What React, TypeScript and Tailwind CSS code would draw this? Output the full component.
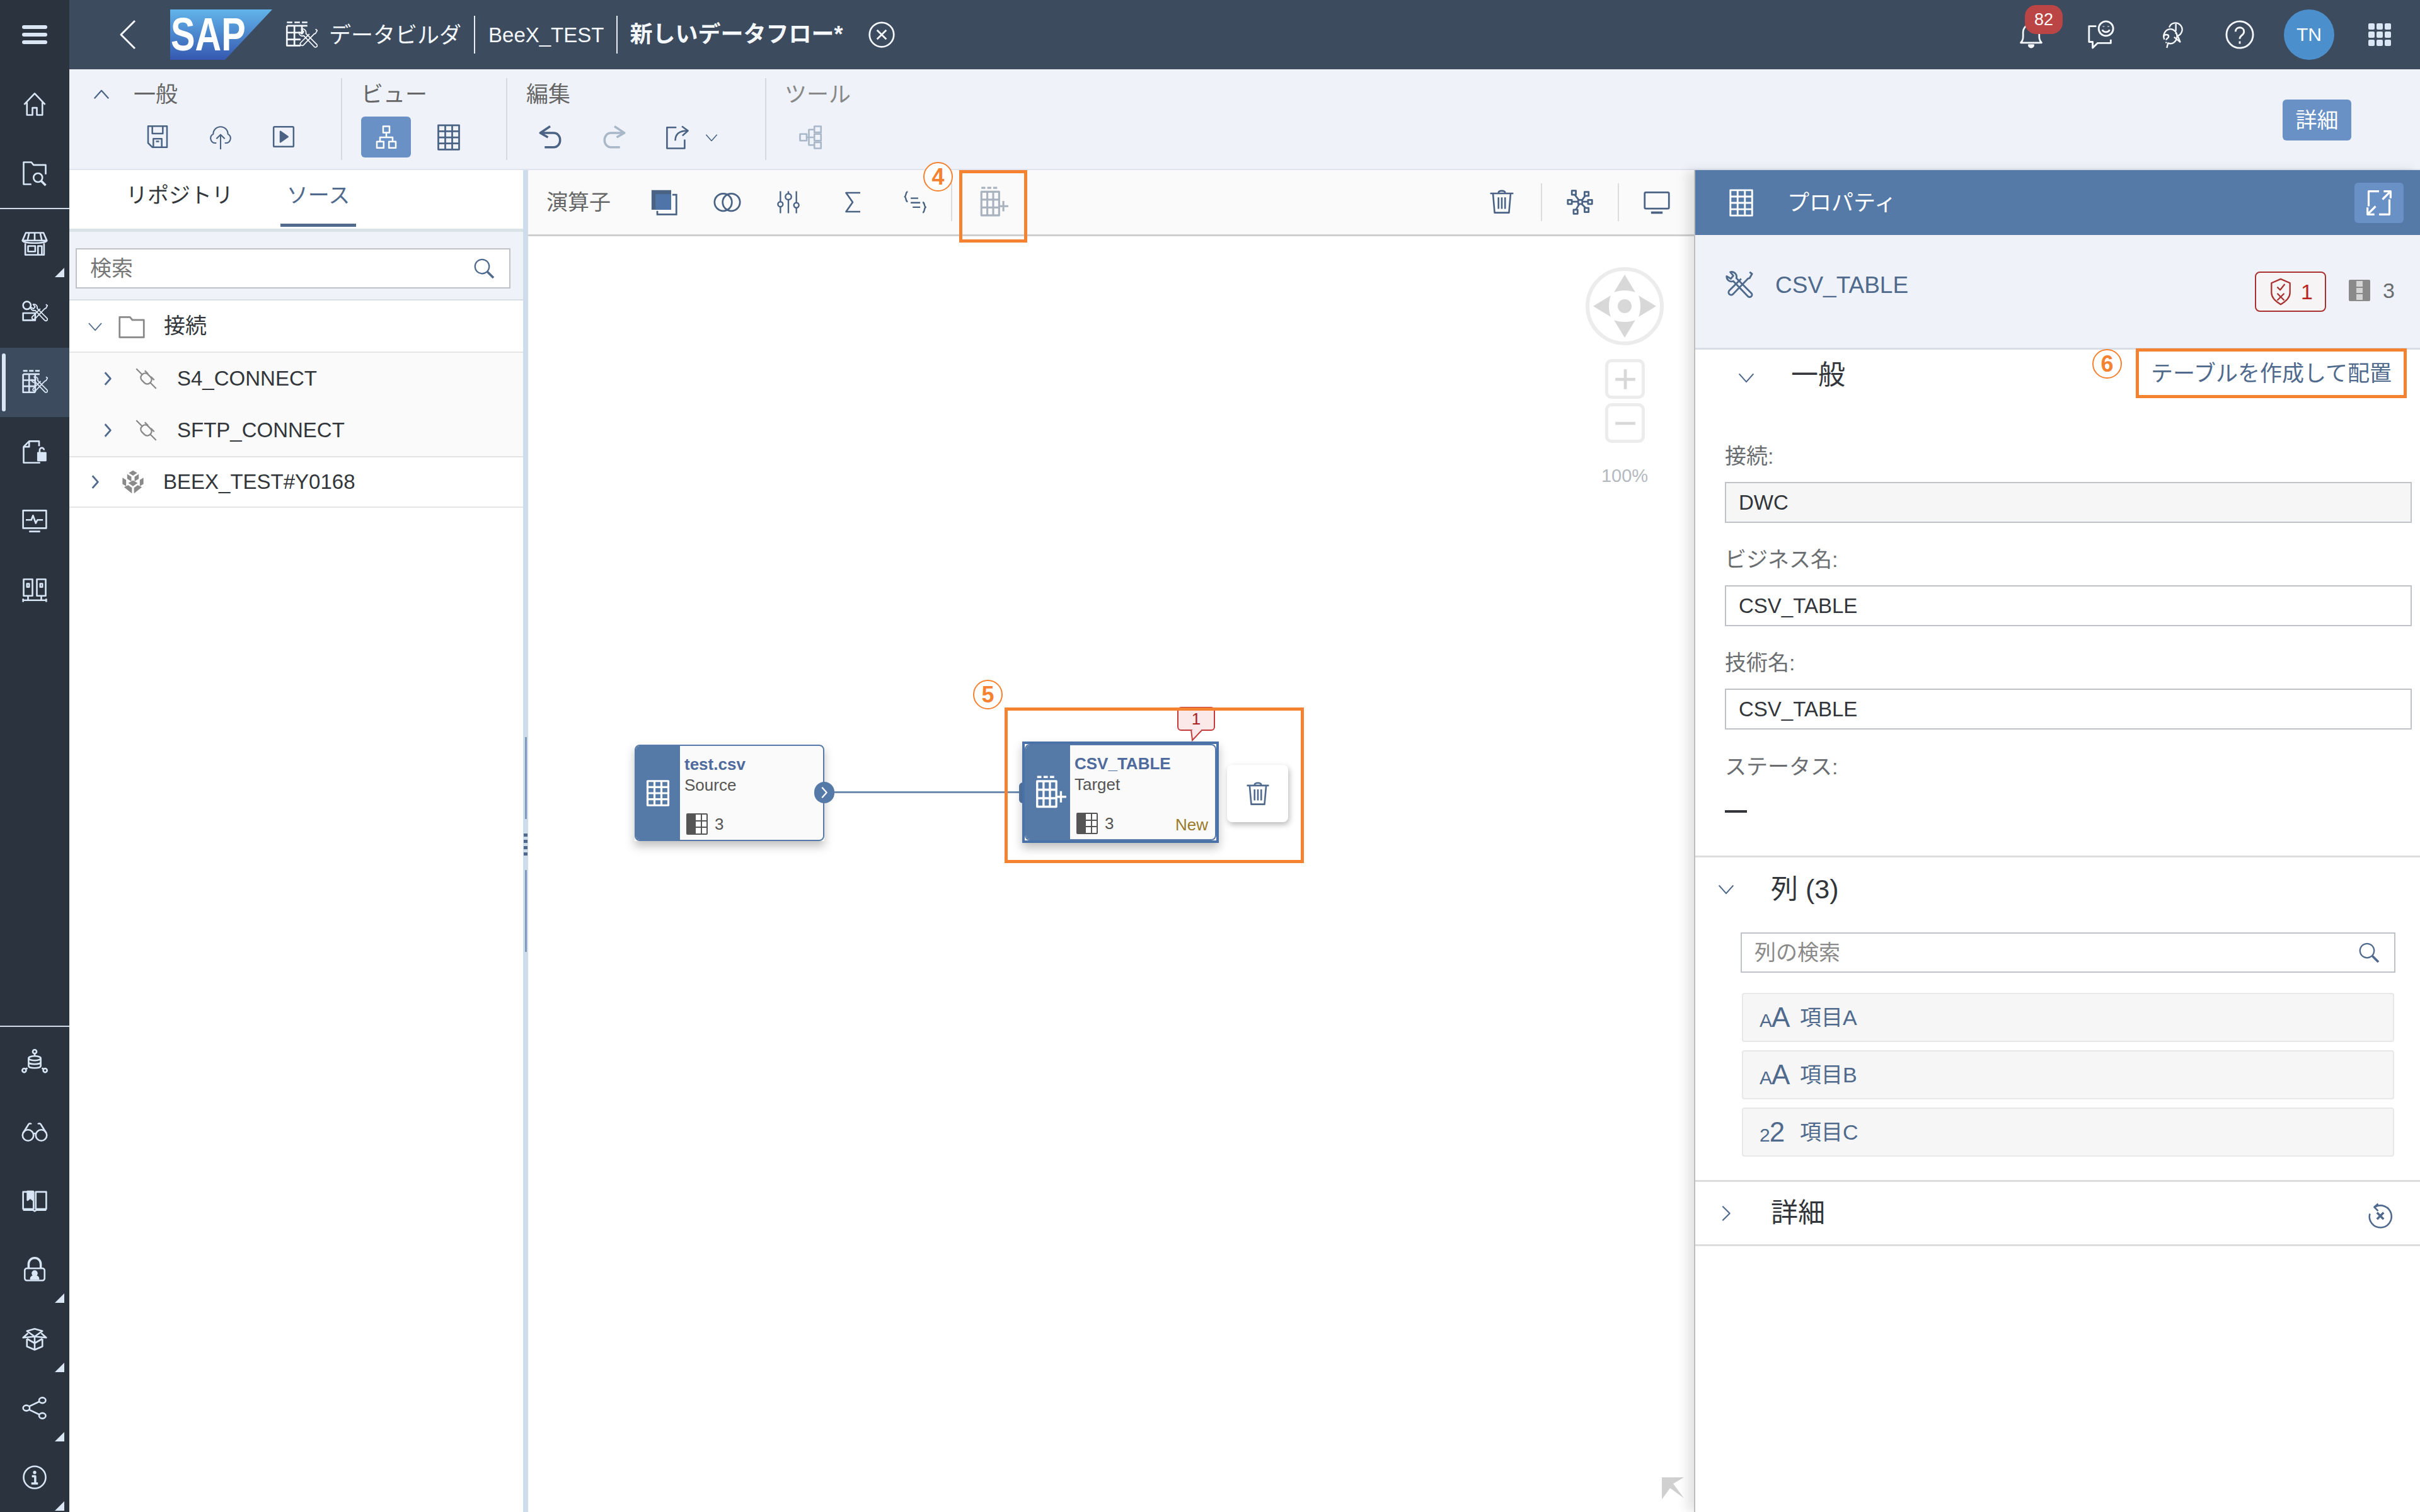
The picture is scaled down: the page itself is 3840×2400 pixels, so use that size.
import React, { JSX, ReactNode } from "react";

type IconProps = { className?: string; sw?: number; children?: ReactNode };

const Ico = ({ className = "", sw = 3, children }: IconProps): JSX.Element => (
	<svg viewBox="0 0 48 48" fill="none" stroke="currentColor" strokeWidth={sw} strokeLinejoin="round" className={className}>
		{children}
	</svg>
);

const Tools = () => (
	<>
		<path d="M4 10a8 8 0 0 0 11 8l24 25a3.500 3.500 0 0 0 6-5L20 13A8 8 0 0 0 10 3l5 6-4 5z" />
		<path d="M42 3l4 3-4 7-3 1-24 25a4 4 0 0 1-7-5l20-20" />
	</>
);

const GridLines = ({ x, y, w, h, c, r }: { x: number; y: number; w: number; h: number; c: number; r: number }) => (
	<>
		<rect x={x} y={y} width={w} height={h} />
		{Array.from({ length: c - 1 }).map((_, i) => (
			<line key={i} x1={x + ((i + 1) * w) / c} x2={x + ((i + 1) * w) / c} y1={y} y2={y + h} />
		))}
		{Array.from({ length: r - 1 }).map((_, i) => (
			<line key={i} y1={y + ((i + 1) * h) / r} y2={y + ((i + 1) * h) / r} x1={x} x2={x + w} />
		))}
	</>
);

const Table = ({ className }: { className?: string }) => (
	<Ico className={className}>
		<GridLines x={6} y={3} w={36} h={42} c={3} r={4} />
	</Ico>
);

const TablePlus = ({ className }: { className?: string }) => (
	<Ico className={className}>
		<path d="M6 2h6M15 2h6M24 2h6" strokeWidth={3} />
		<GridLines x={6} y={8} w={27} h={36} c={3} r={3} />
		<path d="M32 30h15M39.500 22v16" />
	</Ico>
);

const Columns = ({ className }: { className?: string }) => (
	<svg viewBox="0 0 34 34" className={className}>
		<rect width="34" height="34" rx="2" fill="currentColor" />
		<path d="M15 2h8v9h-8zM25 2h7v9h-7zM15 13h8v8h-8zM25 13h7v8h-7zM15 23h8v9h-8zM25 23h7v9h-7z" fill="#fff" />
	</svg>
);

const Search = ({ className }: { className?: string }) => (
	<Ico className={className} sw={3}>
		<circle cx="20" cy="20" r="15" />
		<path d="M31 31l13 13" strokeWidth={5} />
	</Ico>
);

const Chev = ({ className }: { className?: string }) => (
	<Ico className={className} sw={3}>
		<path d="M8 16l16 18 16-18" />
	</Ico>
);

const ChevR = ({ className }: { className?: string }) => (
	<Ico className={className} sw={5}>
		<path d="M16 6l16 18-16 18" />
	</Ico>
);

const Plug = ({ className }: { className?: string }) => (
	<Ico className={className} sw={3}>
		<path d="M3 3l13 13M32 32l13 13M21 7l7 7M34 20l7 7" />
		<rect x="12" y="15" width="24" height="18" rx="8" transform="rotate(45 24 24)" />
	</Ico>
);

const navTop = [
	{
		k: "store",
		arrow: true,
		icon: (
			<>
				<path d="M8 4h32l6 14H2z" />
				<path d="M14 4l-3 14M24 4v14M34 4l3 14M2 18c0 6 44 6 44 0" />
				<path d="M7 23v21h34V23M12 28h13v10H12zM30 44V28h7v16" />
			</>
		),
	},
	{
		k: "tools",
		arrow: false,
		icon: (
			<>
				<circle cx="10" cy="10" r="7" />
				<rect x="3" y="24" width="22" height="13" />
				<g transform="translate(14 6) scale(0.72)">
					<Tools />
				</g>
			</>
		),
	},
	{
		k: "builder",
		arrow: false,
		active: true,
		icon: (
			<>
				<path d="M3 3h8M14 3h8M25 3h8" />
				<path d="M3 9h30M3 9v33h22M3 20h22M3 31h22M14 9v33M25 9v33" />
				<g transform="translate(16 12) scale(0.68)">
					<Tools />
				</g>
			</>
		),
	},
	{
		k: "doc",
		arrow: false,
		icon: (
			<>
				<path d="M32 14V5H14L4 15v29h30" />
				<path d="M14 5v10H4" />
				<rect x="30" y="26" width="14" height="14" fill="currentColor" />
				<path d="M33 26v-5a4 4 0 0 1 8 0" />
			</>
		),
	},
	{
		k: "monitor",
		arrow: false,
		icon: (
			<>
				<rect x="3" y="5" width="42" height="32" />
				<path d="M8 22h10l3-8 5 14 3-6h10M14 43h20" />
			</>
		),
	},
	{
		k: "server",
		arrow: false,
		icon: (
			<>
				<rect x="4" y="4" width="16" height="30" />
				<rect x="28" y="4" width="16" height="30" />
				<path d="M10 12h4v6h-4zM34 12h4v6h-4zM12 34v8M36 34v8M3 42h42M3 39v6M45 39v6" />
			</>
		),
	},
];

const navBottom = [
	{
		k: "data",
		arrow: false,
		icon: (
			<>
				<ellipse cx="24" cy="18" rx="11" ry="4" />
				<path d="M13 18v14c0 5 22 5 22 0V18M13 25c0 5 22 5 22 0M24 9v5M11 36l-4 2M37 36l4 2" />
				<circle cx="24" cy="6" r="3.500" />
				<circle cx="5" cy="40" r="3.500" />
				<circle cx="43" cy="40" r="3.500" />
			</>
		),
	},
	{
		k: "glasses",
		arrow: false,
		icon: (
			<>
				<circle cx="12" cy="32" r="10" />
				<circle cx="36" cy="32" r="10" />
				<path d="M22 30c1-2 3-2 4 0M3 28L13 12c1-2 4-2 5 0M45 28L35 12c-1-2-4-2-5 0" />
			</>
		),
	},
	{
		k: "book",
		arrow: false,
		icon: (
			<>
				<path d="M3 9h19v31H3zM26 9h19v31H26zM3 42h18l3 2 3-2h18" />
				<path d="M11 8v16l5-4 5 4V8z" fill="currentColor" />
			</>
		),
	},
	{
		k: "lock",
		arrow: true,
		icon: (
			<>
				<path d="M13 22V14a11 11 0 0 1 22 0v8" strokeWidth={4} />
				<rect x="6" y="22" width="36" height="22" rx="4" />
				<circle cx="24" cy="31" r="4" fill="currentColor" />
				<path d="M17 41c0-7 14-7 14 0z" fill="currentColor" />
			</>
		),
	},
	{
		k: "box",
		arrow: true,
		icon: (
			<>
				<path d="M24 20L10 10 24 6l14 4zM24 20L3 22l9-8M24 20l21 2-9-8" />
				<path d="M10 24v14l14 6 14-6V24M24 20v24M24 32l-14-8M24 32l14-8" />
			</>
		),
	},
	{
		k: "share",
		arrow: true,
		icon: (
			<>
				<ellipse cx="9" cy="24" rx="6" ry="5" />
				<ellipse cx="38" cy="10" rx="6" ry="5" />
				<ellipse cx="38" cy="38" rx="6" ry="5" />
				<path d="M14 21l19-9M14 27l19 9" />
			</>
		),
	},
	{
		k: "info",
		arrow: true,
		icon: (
			<>
				<circle cx="24" cy="24" r="20" />
				<circle cx="24" cy="15" r="3" fill="currentColor" stroke="none" />
				<path d="M19 22h6v12M18 35h12" strokeWidth={4} />
			</>
		),
	},
];

const NavItem = ({ item }: { item: { icon: ReactNode; arrow: boolean; active?: boolean } }) => (
	<div className={`relative flex h-[110px] w-full items-center justify-center ${item.active ? "bg-[#3d4b5f]" : ""}`}>
		{item.active && <div className="absolute left-[3px] top-[9px] h-[92px] w-[6px] rounded bg-[#dbe6f4]" />}
		<Ico className="h-[42px] w-[42px]">{item.icon}</Ico>
		{item.arrow && <div className="absolute bottom-[2px] right-[8px] h-0 w-0 border-b-[15px] border-l-[15px] border-b-[#dbe6f4] border-l-transparent" />}
	</div>
);

const Nav = () => (
	<nav className="flex h-full w-[110px] shrink-0 flex-col bg-[#2b333e] text-[#d8e5f5]">
		<div className="flex h-[110px] w-full items-center justify-center">
			<div className="flex w-[40px] flex-col gap-[6px]">
				<div className="h-[6px] rounded-sm bg-[#dbe6f4]" />
				<div className="h-[6px] rounded-sm bg-[#dbe6f4]" />
				<div className="h-[6px] rounded-sm bg-[#dbe6f4]" />
			</div>
		</div>
		<NavItem
			item={{
				arrow: false,
				icon: (
					<>
						<path d="M5 25L24 5l19 20M10 21v23h10V31h8v13h10V21" />
					</>
				),
			}}
		/>
		<NavItem
			item={{
				arrow: false,
				icon: (
					<>
						<path d="M18 44H4V4h14l4 5h22v17" />
						<circle cx="30" cy="32" r="8" />
						<path d="M36 38l8 8" strokeWidth={4} />
					</>
				),
			}}
		/>
		<div className="h-[2px] w-full bg-[#cfdbe9]" />
		{navTop.map((n) => (
			<NavItem key={n.k} item={n} />
		))}
		<div className="mt-auto h-[2px] w-full bg-[#cfdbe9]" />
		{navBottom.map((n) => (
			<NavItem key={n.k} item={n} />
		))}
	</nav>
);

const Header = () => (
	<header className="flex h-[110px] w-full items-center bg-[#3d4b5f] text-[#f4f8fd]">
		<Ico className="ml-[68px] h-[48px] w-[48px]" sw={3}>
			<path d="M36 2L14 24l22 22" />
		</Ico>
		<div className="relative ml-[44px] h-[80px] w-[162px]">
			<svg viewBox="0 0 162 80" className="h-[80px] w-[162px]">
				<defs>
					<linearGradient id="sapg" x1="0" y1="0" x2="0" y2="1">
						<stop offset="0" stopColor="#62b4ea" />
						<stop offset="1" stopColor="#3558b0" />
					</linearGradient>
				</defs>
				<polygon points="0,0 162,0 87,80 0,80" fill="url(#sapg)" />
			</svg>
			<span className="absolute left-[1px] top-0 origin-left scale-x-[0.78] text-[74px] font-bold leading-[80px] text-white">SAP</span>
		</div>
		<Ico className="ml-[20px] h-[52px] w-[52px]" sw={2.500}>
			<path d="M3 6h8M14 6h8M25 6h8M3 11h30M3 11v29h20M3 21h24M3 31h20M14 11v29M25 11v12" />
			<g transform="translate(18 14) scale(0.64)">
				<Tools />
			</g>
		</Ico>
		<span className="ml-[18px] text-[35px] leading-none">データビルダ</span>
		<div className="ml-[20px] h-[60px] w-[2px] bg-[#e6edf6]" />
		<span className="ml-[21px] text-[33px] leading-none">BeeX_TEST</span>
		<div className="ml-[20px] h-[60px] w-[2px] bg-[#e6edf6]" />
		<span className="ml-[19px] text-[36px] font-bold leading-none">新しいデータフロー*</span>
		<Ico className="ml-[40px] h-[44px] w-[44px]">
			<circle cx="24" cy="24" r="21" />
			<path d="M16 16l16 16M32 16L16 32" />
		</Ico>
		<div className="ml-auto flex h-full items-center">
			<div className="relative flex h-[44px] w-[44px] items-center justify-center">
				<Ico className="h-[44px] w-[44px]">
					<path d="M6 38c5-5 4-10 4-18a14 14 0 0 1 28 0c0 8-1 13 4 18z" />
					<path d="M20 42a4 4 0 0 0 8 0z" fill="currentColor" />
				</Ico>
				<div className="absolute left-[12px] top-[-25px] flex h-[46px] w-[60px] items-center justify-center rounded-[18px] bg-[#bb4545] text-[27px] leading-none text-white">82</div>
			</div>
			<Ico className="ml-[66px] h-[46px] w-[46px]">
				<path d="M16 10H4v26h6v10l8-8h22v-6" />
				<circle cx="32" cy="14" r="12" />
				<path d="M26 16c2 5 10 5 12 0M28 10v1M36 10v1" />
			</Ico>
			<Ico className="ml-[64px] h-[46px] w-[46px]" sw={2.500}>
				<path d="M14 46l2-8a11 12 0 1 0-6-6" transform="translate(4 0)" />
				<path d="M22 12a11 11 0 1 1 14 14l4 10-10-8" />
				<path d="M13 27c0-4 8-4 8 0 0 3-4 3-4 6M17 36v2M33 6v12M33 21v2" />
			</Ico>
			<Ico className="ml-[64px] h-[46px] w-[46px]">
				<circle cx="24" cy="24" r="22" />
				<path d="M17 19c0-9 14-9 14 0 0 6-7 6-7 12M24 35v4" />
			</Ico>
			<div className="ml-[47px] flex h-[80px] w-[80px] items-center justify-center rounded-full bg-[#4b90cc] text-[30px] leading-none text-white">TN</div>
			<div className="ml-[54px] mr-[46px] grid w-[36px] grid-cols-3 gap-[3px]">
				{Array.from({ length: 9 }).map((_, i) => (
					<div key={i} className="h-[10px] rounded-[2px] bg-[#dbe6f4]" />
				))}
			</div>
		</div>
	</header>
);

const Sep = () => <div className="h-[130px] w-[2px] self-center bg-[#d5dae1]" />;

const Ribbon = () => (
	<div className="relative flex h-[160px] w-full items-start border-b-[2px] border-b-[#dfe4ee] bg-[#eff3f9] text-[#4a6385]">
		<div className="w-[431px] shrink-0 pl-[32px] pt-[15px]">
			<div className="flex items-center text-[#666]">
				<Ico className="ml-[4px] h-[30px] w-[30px] text-[#4a6385]" sw={3.500}>
					<path d="M6 34l18-20 18 20" />
				</Ico>
				<span className="ml-[36px] text-[35px] leading-[50px]">一般</span>
			</div>
			<div className="mt-[22px] ml-[88px] flex gap-[60px]">
				<Ico className="h-[40px] w-[40px]">
					<path d="M6 4h36v40H14l-8-8z" />
					<path d="M14 4v14h20V4M16 44V28h16v16M21 33h6" />
				</Ico>
				<Ico className="h-[40px] w-[40px]" sw={2.500}>
					<path d="M16 36h-2a9 9 0 0 1-4-17 14 14 0 0 1 28 0 9 9 0 0 1-4 17h-2M24 48V20M16 28l8-8 8 8" />
				</Ico>
				<Ico className="h-[40px] w-[40px]">
					<rect x="5" y="5" width="38" height="38" rx="2" />
					<path d="M18 14l14 10-14 10z" fill="currentColor" />
				</Ico>
			</div>
		</div>
		<Sep />
		<div className="w-[260px] shrink-0 pl-[30px] pt-[15px]">
			<div className="text-[35px] leading-[50px] text-[#666]">ビュー</div>
			<div className="mt-[10px] flex items-center">
				<div className="flex h-[65px] w-[79px] items-center justify-center rounded-md bg-[#6a91c6] text-white">
					<Ico className="h-[40px] w-[40px]">
						<rect x="18" y="3" width="12" height="12" />
						<rect x="6" y="32" width="13" height="12" />
						<rect x="29" y="32" width="13" height="12" />
						<path d="M24 15v9M12 32v-8h24v8" />
					</Ico>
				</div>
				<Table className="ml-[38px] h-[44px] w-[44px]" />
			</div>
		</div>
		<Sep />
		<div className="w-[409px] shrink-0 pl-[30px] pt-[15px]">
			<div className="text-[35px] leading-[50px] text-[#666]">編集</div>
			<div className="mt-[22px] flex items-center">
				<Ico className="ml-[17px] h-[42px] w-[42px]" sw={4}>
					<path d="M24 4L6 16l14 8M6 16h24c16 0 16 26 0 26H14" />
				</Ico>
				<Ico className="ml-[60px] h-[42px] w-[42px] text-[#a9b8c8]" sw={4}>
					<path d="M24 4l18 12-14 8M42 16H18C2 16 2 42 18 42h16" />
				</Ico>
				<Ico className="ml-[58px] h-[42px] w-[42px]">
					<path d="M22 6H5v38h32V28" />
					<path d="M20 30c0-12 8-18 22-18M32 4l11 8-10 9" />
				</Ico>
				<Chev className="ml-[20px] h-[26px] w-[26px]" />
			</div>
		</div>
		<Sep />
		<div className="pl-[29px] pt-[15px]">
			<div className="text-[35px] leading-[50px] text-[#888]">ツール</div>
			<div className="mt-[22px] ml-[21px] text-[#a9b8c8]">
				<Ico className="h-[42px] w-[42px]">
					<rect x="4" y="18" width="12" height="12" />
					<rect x="30" y="4" width="12" height="11" />
					<rect x="30" y="18" width="12" height="12" />
					<rect x="30" y="33" width="12" height="11" />
					<path d="M16 24h14M20 24v-14h10M20 24v14h10" />
				</Ico>
			</div>
		</div>
		<div className="ml-auto mr-[109px] mt-[48px] flex h-[65px] w-[109px] items-center justify-center rounded-md bg-[#6a91c6] text-[34px] leading-none text-white">詳細</div>
	</div>
);

const LeftPanel = () => (
	<aside className="flex h-full w-[720px] shrink-0 flex-col bg-white text-[33px] text-[#32363a]">
		<div className="flex h-[98px] items-start border-b-[5px] border-b-[#d9e3e8] text-[34px]">
			<span className="ml-[90px] mt-[15px] leading-[50px]">リポジトリ</span>
			<div className="ml-[75px] flex h-[93px] w-[120px] flex-col items-center text-[#4f6a8c]">
				<span className="mt-[15px] leading-[50px]">ソース</span>
				<div className="mt-auto mb-[3px] h-[5px] w-full bg-[#4f6a8c]" />
			</div>
		</div>
		<div className="h-[109px] border-b-[2px] border-b-[#d9dee5] bg-[#eff3f9] pl-[10px] pr-[20px] pt-[26px]">
			<div className="flex h-[64px] items-center justify-between border-[2px] border-[#bfc3c8] bg-white pl-[21px] pr-[22px] text-[34px] text-[#777]">
				<span>検索</span>
				<Search className="h-[36px] w-[36px] text-[#4f6a8c]" />
			</div>
		</div>
		<div className="flex h-[83px] items-center border-b-[2px] border-b-[#e5e5e5] text-[34px]">
			<Chev className="ml-[26px] h-[30px] w-[30px] text-[#4f6a8c]" />
			<Ico className="ml-[21px] h-[44px] w-[44px] text-[#888]">
				<path d="M3 8h18l4 5h20v30H3z" />
			</Ico>
			<span className="ml-[29px]">接続</span>
		</div>
		{["S4_CONNECT", "SFTP_CONNECT"].map((t) => (
			<div key={t} className="flex h-[82px] items-center bg-[#fafafa]">
				<ChevR className="ml-[48px] h-[26px] w-[26px] text-[#4f6a8c]" />
				<Plug className="ml-[30px] h-[36px] w-[36px] text-[#888]" />
				<span className="ml-[31px]">{t}</span>
			</div>
		))}
		<div className="flex h-[82px] items-center border-y-[2px] border-y-[#e5e5e5]">
			<ChevR className="ml-[28px] h-[26px] w-[26px] text-[#4f6a8c]" />
			<svg viewBox="0 0 48 48" className="ml-[27px] h-[40px] w-[40px] text-[#8a8a8a]">
				<path d="M24 2l8 5-8 5-8-5zM13 9l8 5v9l-8-5zM35 9l-8 5v9l8-5zM4 16l7 4v12l-7-4zM44 16l-7 4v12l7-4zM24 21l9 5-9 6-9-6zM7 34l8-4 7 5v11zM41 34l-8-4-7 5v11z" fill="currentColor" />
			</svg>
			<span className="ml-[28px]">BEEX_TEST#Y0168</span>
		</div>
	</aside>
);

const Splitter = () => (
	<div className="relative flex h-full w-[8px] shrink-0 flex-col items-center bg-[#cfdceb]">
		<div className="mt-[900px] h-[130px] w-[3px] bg-[#7f9abb]" />
		<div className="mt-[23px] flex flex-col gap-[5px]">
			<div className="h-[5px] w-[6px] bg-[#4f6a8c]" />
			<div className="h-[5px] w-[6px] bg-[#4f6a8c]" />
			<div className="h-[5px] w-[6px] bg-[#4f6a8c]" />
			<div className="h-[5px] w-[6px] bg-[#4f6a8c]" />
		</div>
		<div className="mt-[23px] h-[130px] w-[3px] bg-[#7f9abb]" />
	</div>
);

const Mark = ({ n, className }: { n: number; className: string }) => (
	<div className={`absolute flex h-[47px] w-[47px] items-center justify-center rounded-full border-[2px] border-[#f58231] bg-white text-[36px] font-bold leading-none text-[#f58231] ${className}`}>
		{n}
	</div>
);

const ToolSep = () => <div className="h-[60px] w-[2px] bg-[#dcdcdc]" />;

const NodeBody = ({ title, sub, tail, children }: { title: string; sub: string; tail?: string; children: ReactNode }) => (
	<div className="flex h-[153px] w-full overflow-hidden rounded-[8px] border-[2px] border-[#567aa8] bg-[#fafafa]">
		<div className="flex h-full w-[70px] shrink-0 items-center justify-center bg-[#567aa8] text-white">{children}</div>
		<div className="relative flex-1 pl-[7px] pt-[12px]">
			<div className="text-[26px] font-bold leading-[34px] text-[#4f6a9c]">{title}</div>
			<div className="text-[26px] leading-[32px] text-[#555]">{sub}</div>
			<div className="absolute bottom-[8px] left-[10px] flex items-center gap-[11px] text-[26px] leading-none text-[#555]">
				<Columns className="h-[34px] w-[34px] text-[#555]" />3
			</div>
			{tail && <div className="absolute bottom-[10px] right-[11px] text-[26px] leading-none text-[#9a7b2a]">{tail}</div>}
		</div>
	</div>
);

const Canvas = () => (
	<main className="relative h-full w-[1850px] shrink-0 bg-white">
		<div className="flex h-[105px] items-center border-b-[3px] border-b-[#cfcfcf] bg-[#fafafa] text-[#4a6385]">
			<span className="ml-[29px] text-[34px] leading-none text-[#666]">演算子</span>
			<svg viewBox="0 0 48 48" className="ml-[63px] h-[44px] w-[44px]">
				<rect x="2" y="3" width="34" height="34" fill="currentColor" />
				<path d="M38 11h7v34H12v-6" fill="none" stroke="currentColor" strokeWidth="3" />
				<rect x="9" y="10" width="27" height="27" fill="#4f75a8" />
			</svg>
			<Ico className="ml-[56px] h-[44px] w-[44px]">
				<circle cx="17" cy="24" r="15" />
				<circle cx="31" cy="24" r="15" />
			</Ico>
			<Ico className="ml-[55px] h-[38px] w-[40px]">
				<path d="M8 2v20M8 34v12M24 2v4M24 20v26M40 2v22M40 36v10" />
				<circle cx="8" cy="28" r="5" />
				<circle cx="24" cy="13" r="6" />
				<circle cx="40" cy="30" r="5" />
			</Ico>
			<Ico className="ml-[62px] h-[36px] w-[40px]" sw={3.500}>
				<path d="M40 4H10l14 20-14 20h30" />
			</Ico>
			<Ico className="ml-[60px] h-[38px] w-[40px]">
				<path d="M8 3C3 3 6 11 2 13c4 2 1 9 6 10M14 16h15M14 25h19M18 34h15M38 24c5 1 2 8 6 10-4 2-1 10-6 11" />
			</Ico>
			<div className="ml-[36px]">
				<ToolSep />
			</div>
			<TablePlus className="ml-[40px] h-[50px] w-[50px] text-[#a9b3c0]" />
			<div className="ml-auto flex items-center">
				<Ico className="h-[42px] w-[42px]">
					<path d="M3 8h42M18 7c0-5 12-5 12 0M8 8l3 35h26l3-35M18 15v21M24 15v21M30 15v21" />
				</Ico>
				<div className="ml-[41px]">
					<ToolSep />
				</div>
				<Ico className="ml-[38px] h-[44px] w-[44px]">
					<path d="M10 4h7v7h-7zM32 6h7v7h-7zM3 20h7v7H3zM21 20h7v7h-7zM38 20h7v7h-7zM13 37h7v7h-7zM32 34h7v7h-7z" />
					<path d="M15 11l7 9M33 13l-5 7M10 23h11M28 23h10M17 37l6-10M34 34l-7-7" />
				</Ico>
				<div className="ml-[38px]">
					<ToolSep />
				</div>
				<Ico className="ml-[38px] mr-[37px] h-[44px] w-[44px]">
					<rect x="3" y="7" width="42" height="28" rx="2" />
					<path d="M14 42h20" strokeWidth={4} />
				</Ico>
			</div>
		</div>

		<div className="absolute left-[684px] top-0 h-[115px] w-[108px] border-[5px] border-[#f58231]" />
		<Mark n={4} className="left-[627px] top-[-13px]" />

		{/* flow diagram */}
		<div className="absolute left-[169px] top-[912px] w-[301px] shadow-[0_8px_14px_rgba(0,0,0,0.25)]">
			<NodeBody title="test.csv" sub="Source">
				<Ico className="h-[44px] w-[44px]" sw={3.500}>
					<GridLines x={6} y={3} w={36} h={42} c={3} r={4} />
				</Ico>
			</NodeBody>
		</div>
		<div className="absolute left-[454px] top-[971px] flex h-[34px] w-[32px] items-center justify-center rounded-full bg-[#567aa8] text-white">
			<ChevR className="h-[22px] w-[22px]" />
		</div>
		<div className="absolute left-[486px] top-[986px] h-[3px] w-[293px] bg-[#6f8db3]" />
		<div className="absolute left-[779px] top-[972px] h-[33px] w-[6px] rounded-l-md bg-[#567aa8]" />
		<div className="absolute left-[784px] top-[907px] w-[312px] border-[4px] border-[#4a72a8] shadow-[0_8px_14px_rgba(0,0,0,0.25)]">
			<NodeBody title="CSV_TABLE" sub="Target" tail="New">
				<TablePlus className="ml-[6px] h-[54px] w-[54px]" />
			</NodeBody>
		</div>
		<div className="absolute left-[1030px] top-[852px] flex h-[38px] w-[60px] items-center justify-center rounded-[6px] border-[2px] border-[#c43b3b] bg-[#fbe8e8] text-[26px] leading-none text-[#a82020]">1</div>
		<svg viewBox="0 0 30 20" className="absolute left-[1049px] top-[888px] h-[20px] w-[30px] text-[#c43b3b]">
			<path d="M3 0l2 17L21 0z" fill="#fbe8e8" stroke="currentColor" strokeWidth="2" />
			<path d="M5 0h14" stroke="#fbe8e8" strokeWidth="3" />
		</svg>
		<div className="absolute left-[1109px] top-[944px] flex h-[91px] w-[97px] items-center justify-center rounded-[8px] bg-white shadow-[2px_4px_10px_rgba(0,0,0,0.28)] text-[#4f6a8c]">
			<Ico className="h-[42px] w-[42px]">
				<path d="M4 9h40M18 8c0-5 12-5 12 0M9 9l3 34h24l3-34M18 16v20M24 16v20M30 16v20" />
			</Ico>
		</div>
		<div className="absolute left-[756px] top-[853px] h-[247px] w-[475px] border-[5px] border-[#f58231]" />
		<Mark n={5} className="left-[706px] top-[809px]" />

		{/* zoom control */}
		<svg viewBox="0 0 124 124" className="absolute left-[1678px] top-[154px] h-[124px] w-[124px]">
			<circle cx="62" cy="62" r="59" fill="none" stroke="#ececec" strokeWidth="6" />
			<path d="M62 12l17 28c-10-4-24-4-34 0zM62 112l17-28c-10 4-24 4-34 0zM12 62l28-17c-4 10-4 24 0 34zM112 62l-28-17c4 10 4 24 0 34z" fill="#d8d8d8" />
			<circle cx="62" cy="62" r="11" fill="#d8d8d8" />
		</svg>
		<div className="absolute left-[1709px] top-[300px] flex h-[63px] w-[63px] items-center justify-center rounded-[10px] border-[5px] border-[#ececec]">
			<Ico className="h-[38px] w-[38px] text-[#d8d8d8]" sw={6}>
				<path d="M24 4v40M4 24h40" />
			</Ico>
		</div>
		<div className="absolute left-[1709px] top-[370px] flex h-[63px] w-[63px] items-center justify-center rounded-[10px] border-[5px] border-[#ececec]">
			<Ico className="h-[38px] w-[38px] text-[#d8d8d8]" sw={6}>
				<path d="M4 24h40" />
			</Ico>
		</div>
		<div className="absolute left-[1680px] top-[466px] w-[120px] text-center text-[29px] leading-[38px] text-[#b5b9bf]">100%</div>
		<svg viewBox="0 0 36 36" className="absolute left-[1799px] top-[2075px] h-[36px] w-[36px]">
			<polygon points="0,0 35,0 18,10 35,33 13,17 0,35" fill="#d0d0d0" />
		</svg>
	</main>
);

const FormField = ({ label, value, dim }: { label: string; value: string; dim?: boolean }) => (
	<div className="mb-[33px]">
		<div className="text-[34px] leading-[50px] text-[#6a6d70]">{label}</div>
		<div className={`mt-[16px] flex h-[65px] items-center border-[2px] border-[#bfc3c8] pl-[20px] text-[33px] leading-none text-[#32363a] ${dim ? "bg-[#f6f6f6]" : "bg-white"}`}>{value}</div>
	</div>
);

const ColItem = ({ kind, label }: { kind: string; label: string }) => (
	<div className="flex h-[78px] items-center rounded-[4px] border-[2px] border-[#e8e8e8] bg-[#f6f6f6] pl-[26px] text-[#4f6a8c]">
		<span className="flex w-[64px] items-baseline leading-none">
			<span className="text-[30px]">{kind}</span>
			<span className="ml-[-1px] text-[44px]">{kind}</span>
		</span>
		<span className="text-[34px] leading-none">{label}</span>
	</div>
);

const RightPanel = () => (
	<section className="z-10 flex h-full flex-1 flex-col border-l-[2px] border-l-[#bdbdbd] bg-white shadow-[-12px_0_16px_rgba(0,0,0,0.1)]">
		<div className="flex h-[103px] shrink-0 items-center bg-[#567aa8] text-white">
			<Table className="ml-[50px] h-[46px] w-[46px]" />
			<span className="ml-[50px] text-[35px] leading-none">プロパティ</span>
			<div className="ml-auto mr-[26px] flex h-[64px] w-[78px] items-center justify-center rounded-md bg-[#6a91c6]">
				<Ico className="h-[44px] w-[44px]" sw={3.500}>
					<path d="M24 4H6v26M24 44h18V18M30 18L44 4M32 4h12v12M18 30L4 44M4 32v12h12" />
				</Ico>
			</div>
		</div>
		<div className="flex h-[182px] shrink-0 items-start border-b-[3px] border-b-[#d9dee6] bg-[#eff3f9] text-[#4f6a8c]">
			<Ico className="ml-[46px] mt-[56px] h-[46px] w-[46px]">
				<Tools />
			</Ico>
			<span className="ml-[35px] mt-[55px] text-[37px] leading-[50px]">CSV_TABLE</span>
			<div className="ml-auto mt-[58px] flex h-[64px] w-[113px] items-center rounded-[8px] border-[2px] border-[#a83232] bg-[#f7f4f5] pl-[17px] text-[34px] leading-none text-[#bb2222]">
				<Ico className="h-[44px] w-[44px] text-[#a83232]" sw={2.500}>
					<path d="M24 2l16 7v17c0 10-9 16-16 20C17 42 8 36 8 26V9z" />
					<path d="M18 16l5 5 8-10M18 27l12 12M30 27L18 39" strokeWidth={2.500} />
				</Ico>
				<span className="ml-[10px]">1</span>
			</div>
			<div className="ml-[36px] mr-[40px] mt-[71px] flex items-center gap-[20px] text-[34px] leading-none text-[#6a6d70]">
				<svg viewBox="0 0 34 34" className="h-[34px] w-[34px] text-[#8a8a8a]">
					<rect width="34" height="34" rx="2" fill="currentColor" />
					<path d="M12 2h10v9H12zM12 13h10v8H12zM12 23h10v9H12z" fill="#d5d5d5" />
				</svg>
				3
			</div>
		</div>
		<div className="relative h-[806px] shrink-0 border-b-[3px] border-b-[#dcdcdc]">
			<div className="flex h-[80px] items-center">
				<Chev className="ml-[64px] mt-[8px] h-[34px] w-[34px] text-[#4f6a8c]" />
				<span className="ml-[54px] text-[43px] leading-none text-[#32363a]">一般</span>
			</div>
			<div className="ml-[47px] mr-[13px] mt-[64px]">
				<FormField label="接続:" value="DWC" dim />
				<FormField label="ビジネス名:" value="CSV_TABLE" />
				<FormField label="技術名:" value="CSV_TABLE" />
				<div className="mt-[34px] text-[34px] leading-[50px] text-[#6a6d70]">ステータス:</div>
				<div className="mt-[44px] h-[4px] w-[35px] bg-[#32363a]" />
			</div>
			<div className="absolute left-[699px] top-[-2px] flex h-[79px] w-[430px] items-center justify-center border-[5px] border-[#f58231] text-[35px] leading-none text-[#4f6a8c]">テーブルを作成して配置</div>
			<Mark n={6} className="left-[630px] top-[-1px]" />
		</div>
		<div className="h-[515px] shrink-0 border-b-[3px] border-b-[#dcdcdc]">
			<div className="flex h-[100px] items-center">
				<Chev className="ml-[32px] h-[34px] w-[34px] text-[#4f6a8c]" />
				<span className="ml-[54px] text-[43px] leading-none text-[#32363a]">列 (3)</span>
			</div>
			<div className="ml-[72px] mr-[39px] mt-[19px] flex h-[64px] items-center justify-between border-[2px] border-[#bfc3c8] pl-[20px] pr-[22px] text-[34px] leading-none text-[#8a8a8a]">
				<span>列の検索</span>
				<Search className="h-[36px] w-[36px] text-[#4f6a8c]" />
			</div>
			<div className="ml-[74px] mr-[41px] mt-[32px] flex flex-col gap-[13px]">
				<ColItem kind="A" label="項目A" />
				<ColItem kind="A" label="項目B" />
				<ColItem kind="2" label="項目C" />
			</div>
		</div>
		<div className="flex h-[102px] shrink-0 items-center border-b-[3px] border-b-[#dcdcdc]">
			<Ico className="ml-[32px] h-[34px] w-[34px] text-[#4f6a8c]">
				<path d="M16 8l16 16-16 16" />
			</Ico>
			<span className="ml-[54px] text-[43px] leading-none text-[#32363a]">詳細</span>
			<Ico className="ml-auto mr-[42px] mt-[8px] h-[42px] w-[42px] text-[#4f6a8c]">
				<path d="M14 8a20 20 0 1 1-9 12M20 2l-7 6 7 7" />
				<path d="M18 18l12 12M30 18L18 30" strokeWidth={4} />
			</Ico>
		</div>
	</section>
);

export default function App(): JSX.Element {
	return (
		<div className="flex h-[2400px] w-[3840px] overflow-hidden bg-white font-['Liberation_Sans','Noto_Sans_CJK_JP',sans-serif]">
			<Nav />
			<div className="flex h-full flex-1 flex-col">
				<Header />
				<Ribbon />
				<div className="flex min-h-0 flex-1">
					<LeftPanel />
					<Splitter />
					<Canvas />
					<RightPanel />
				</div>
			</div>
		</div>
	);
}
